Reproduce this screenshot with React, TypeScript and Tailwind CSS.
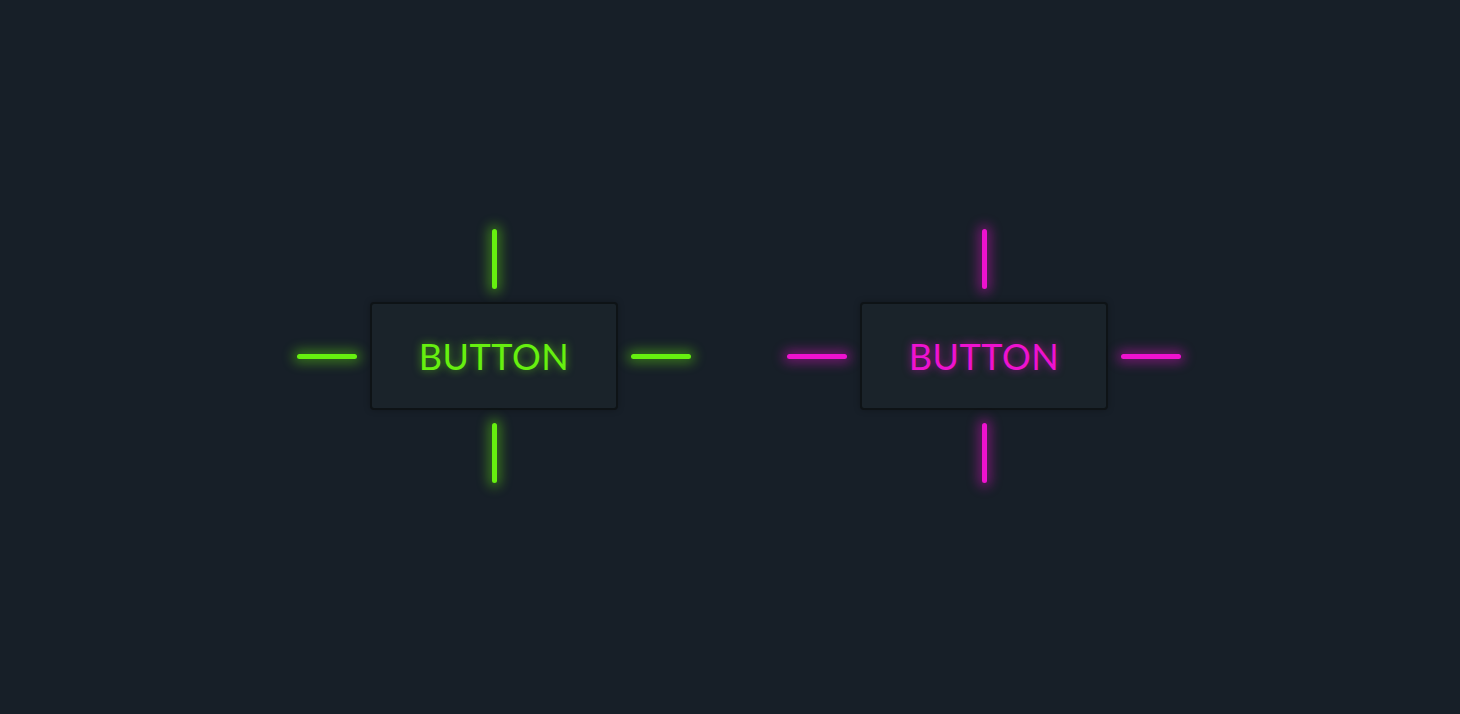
type Tone = "green" | "pink";

const tones: Record<Tone, { text: string; bar: string }> = {
  green: {
    text: "text-[#66f00f] [text-shadow:0_0_8px_rgba(102,240,15,0.6)]",
    bar: "bg-[#66f00f] shadow-[0_0_12px_4px_rgba(102,240,15,0.4)]",
  },
  pink: {
    text: "text-[#ee12cf] [text-shadow:0_0_8px_rgba(238,18,207,0.6)]",
    bar: "bg-[#ee12cf] shadow-[0_0_12px_4px_rgba(238,18,207,0.4)]",
  },
};

const NeonButton: React.FC<{ tone: Tone }> = ({ tone }) => {
  const t = tones[tone];

  return (
    <div className="grid grid-cols-[60px_248px_60px] grid-rows-[60px_108px_60px] gap-[13px]">
      <div />
      <div className="flex justify-center">
        <span className={`w-[5px] h-full rounded-full ${t.bar}`} />
      </div>
      <div />

      <div className="flex items-center">
        <span className={`w-full h-[5px] rounded-full ${t.bar}`} />
      </div>
      <button
        className={`flex items-center justify-center rounded-[4px] border-2 border-[#0e1316] bg-[#1a232a] shadow-[0_0_6px_rgba(0,0,0,0.25)] ${t.text} font-['Lato',sans-serif] text-[36px] tracking-[0.5px] leading-none`}
      >
        BUTTON
      </button>
      <div className="flex items-center">
        <span className={`w-full h-[5px] rounded-full ${t.bar}`} />
      </div>

      <div />
      <div className="flex justify-center">
        <span className={`w-[5px] h-full rounded-full ${t.bar}`} />
      </div>
      <div />
    </div>
  );
};

export default function App() {
  return (
    <div className="w-full h-[714px] bg-[#171f28] flex items-center justify-center gap-[96px] pl-[18px] pb-[2px]">
      <NeonButton tone="green" />
      <NeonButton tone="pink" />
    </div>
  );
}
